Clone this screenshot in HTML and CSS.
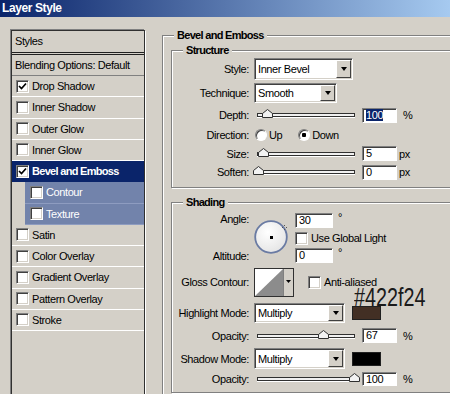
FILE: index.html
```html
<!DOCTYPE html>
<html lang="en">
<head>
    <meta charset="UTF-8">
    <meta name="viewport" content="width=device-width, initial-scale=1.0">
    <title>Layer Style</title>
    <link rel="stylesheet" href="styles.css">
</head>
<body>

    <div class="titlebar">Layer Style</div>

    <div class="dialog">
        <div class="styles-panel">
            <div class="panel-head">Styles</div>
            <div class="panel-blend">Blending Options: Default</div>
            <ul class="fx-list">
                <li class="fx"><span class="cb"><svg width="9" height="9" viewBox="0 0 9 9"><polyline points="1,4 3.5,6.5 8,1.5" fill="none" stroke="#000" stroke-width="1.7"/></svg></span>Drop Shadow</li>
                <li class="fx"><span class="cb"></span>Inner Shadow</li>
                <li class="fx"><span class="cb"></span>Outer Glow</li>
                <li class="fx"><span class="cb"></span>Inner Glow</li>
                <li class="fx active"><span class="cb"><svg width="9" height="9" viewBox="0 0 9 9"><polyline points="1,4 3.5,6.5 8,1.5" fill="none" stroke="#000" stroke-width="1.7"/></svg></span>Bevel and Emboss</li>
                <li class="fx sub"><span class="cb"></span>Contour</li>
                <li class="fx sub"><span class="cb"></span>Texture</li>
                <li class="fx"><span class="cb"></span>Satin</li>
                <li class="fx"><span class="cb"></span>Color Overlay</li>
                <li class="fx"><span class="cb"></span>Gradient Overlay</li>
                <li class="fx"><span class="cb"></span>Pattern Overlay</li>
                <li class="fx"><span class="cb"></span>Stroke</li>
            </ul>
        </div>

        <fieldset class="group outer">
            <legend>Bevel and Emboss</legend>

            <fieldset class="group inner">
                <legend>Structure</legend>

                <div class="row r-style">
                    <span class="lbl">Style:</span>
                    <div class="select w-style">Inner Bevel<span class="drop"><i class="arrow"></i></span></div>
                </div>
                <div class="row r-tech">
                    <span class="lbl">Technique:</span>
                    <div class="select w-tech">Smooth<span class="drop"><i class="arrow"></i></span></div>
                </div>
                <div class="row r-depth">
                    <span class="lbl">Depth:</span>
                    <div class="slider"><svg class="thumb" style="left: 9%" width="11" height="9" viewBox="0 0 11 9"><path d="M0.5 8.5V4.5L5.5 0.5L10.5 4.5V8.5Z" fill="#f2f2f2" stroke="#303030"/></svg></div>
                    <div class="field"><span class="sel">100</span></div>
                    <span class="unit">%</span>
                </div>
                <div class="row r-dir">
                    <span class="lbl">Direction:</span>
                    <span class="radio"></span><span class="radio-text">Up</span>
                    <span class="radio on"></span><span class="radio-text">Down</span>
                </div>
                <div class="row r-size">
                    <span class="lbl">Size:</span>
                    <div class="slider"><svg class="thumb" style="left: 5%" width="11" height="9" viewBox="0 0 11 9"><path d="M0.5 8.5V4.5L5.5 0.5L10.5 4.5V8.5Z" fill="#f2f2f2" stroke="#303030"/></svg></div>
                    <div class="field">5</div>
                    <span class="unit px">px</span>
                </div>
                <div class="row r-soften">
                    <span class="lbl">Soften:</span>
                    <div class="slider"><svg class="thumb" style="left: 0%" width="11" height="9" viewBox="0 0 11 9"><path d="M0.5 8.5V4.5L5.5 0.5L10.5 4.5V8.5Z" fill="#f2f2f2" stroke="#303030"/></svg></div>
                    <div class="field">0</div>
                    <span class="unit px">px</span>
                </div>
            </fieldset>

            <fieldset class="group inner shading">
                <legend>Shading</legend>

                <div class="angle">
                    <span class="lbl lbl-top">Angle:</span>
                    <svg class="dial" width="34" height="34" viewBox="0 0 34 34">
                        <defs>
                            <radialGradient id="dialFill" cx="0.4" cy="0.35" r="0.7">
                                <stop offset="0" stop-color="#ffffff"/>
                                <stop offset="1" stop-color="#e4e4e4"/>
                            </radialGradient>
                        </defs>
                        <circle cx="17" cy="17" r="15.8" fill="url(#dialFill)" stroke="#6a7ba3" stroke-width="1.8"/>
                        <rect x="16" y="16" width="3" height="3" fill="#000"/>
                        <g fill="#555">
                            <rect x="30" y="5" width="1" height="1"/>
                            <rect x="30" y="9" width="1" height="1"/>
                            <rect x="28" y="7" width="1" height="1"/>
                            <rect x="32" y="7" width="1" height="1"/>
                        </g>
                    </svg>
                    <div class="a-input"><div class="field w-angle">30</div><span class="deg">°</span></div>
                    <div class="a-check"><span class="cb"></span>Use Global Light</div>
                    <span class="lbl">Altitude:</span>
                    <div class="a-input"><div class="field w-angle">0</div><span class="deg">°</span></div>
                </div>

                <div class="row r-gloss">
                    <span class="lbl">Gloss Contour:</span>
                    <svg class="contour" width="40" height="29" viewBox="0 0 40 29">
                        <rect x="0.5" y="0.5" width="39" height="28" fill="#fff" stroke="#303030"/>
                        <polygon points="1,28 29,1 29,28" fill="#8c8c8c"/>
                        <rect x="29" y="1" width="10" height="27" fill="#d4d0c8"/>
                        <line x1="29.5" y1="1" x2="29.5" y2="28" stroke="#808080"/>
                        <polygon points="32,12 37,12 34.5,15" fill="#000"/>
                    </svg>
                    <span class="cb cb-anti"></span><span class="anti">Anti-aliased</span>
                    <span class="hex">#422f24</span>
                </div>
                <div class="row r-high">
                    <span class="lbl">Highlight Mode:</span>
                    <div class="select w-mode">Multiply<span class="drop"><i class="arrow"></i></span></div>
                    <span class="swatch highlight"></span>
                </div>
                <div class="row r-op1">
                    <span class="lbl">Opacity:</span>
                    <div class="slider"><svg class="thumb" style="left: 68%" width="11" height="9" viewBox="0 0 11 9"><path d="M0.5 8.5V4.5L5.5 0.5L10.5 4.5V8.5Z" fill="#f2f2f2" stroke="#303030"/></svg></div>
                    <div class="field">67</div>
                    <span class="unit">%</span>
                </div>
                <div class="row r-shadow">
                    <span class="lbl">Shadow Mode:</span>
                    <div class="select w-mode">Multiply<span class="drop"><i class="arrow"></i></span></div>
                    <span class="swatch shadow"></span>
                </div>
                <div class="row r-op2">
                    <span class="lbl">Opacity:</span>
                    <div class="slider"><svg class="thumb" style="left: 100%" width="11" height="9" viewBox="0 0 11 9"><path d="M0.5 8.5V4.5L5.5 0.5L10.5 4.5V8.5Z" fill="#f2f2f2" stroke="#303030"/></svg></div>
                    <div class="field">100</div>
                    <span class="unit">%</span>
                </div>
            </fieldset>
        </fieldset>
    </div>

</body>
</html>
```

FILE: styles.css
```css
body {
    margin: 0;
    width: 450px;
    height: 394px;
    overflow: hidden;
    background-color: #d4d0c8;
    color: #000;
    font-family: "Liberation Sans", Arial, sans-serif;
    font-size: 11px;
    letter-spacing: -0.4px;
}

.titlebar {
    height: 17px;
    line-height: 17px;
    padding-left: 2px;
    background: linear-gradient(to right, #0a246a, #a6caf0);
    color: white;
    font-size: 12px;
    font-weight: bold;
}

.dialog {
    display: flex;
    align-items: flex-start;
    height: 377px;
    overflow: hidden;
}

/* left list of effects */
.styles-panel {
    flex: none;
    width: 132px;
    height: 380px;
    margin: 13px 0 0 11px;
    border: 1px solid #303030;
    box-shadow: -1px -1px 0 #808080, 1px 1px 0 #fff;
}

.panel-head {
    height: 21px;
    line-height: 21px;
    padding-left: 3px;
    border-bottom: 3px double #202020;
}

.panel-blend {
    height: 20px;
    line-height: 20px;
    padding-left: 3px;
    border-bottom: 1px solid #808080;
}

.fx-list {
    list-style: none;
    margin: 0;
    padding: 0;
}

.fx {
    height: 20.25px;
    display: flex;
    align-items: center;
    padding-left: 4px;
    border-bottom: 1px solid #fff;
}

.fx.active {
    background-color: #0a246a;
    color: white;
    font-weight: bold;
    letter-spacing: -0.7px;
    border-bottom-color: #0a246a;
}

.fx.sub {
    margin-left: 13px;
    padding-left: 5px;
    background-color: #7283ab;
    color: white;
    border-bottom-color: #8e9cc0;
}

.cb {
    flex: none;
    box-sizing: border-box;
    width: 13px;
    height: 13px;
    margin-right: 3px;
    display: flex;
    align-items: center;
    justify-content: center;
    background-color: #fff;
    border: 1px solid;
    border-color: #808080 #fff #fff #808080;
    box-shadow: inset 1px 1px 0 #404040, inset -1px -1px 0 #d4d0c8;
}

/* fieldsets */
.group {
    margin: 0;
    padding: 0;
    border: 1px solid #808080;
    box-shadow: inset 1px 1px 0 #fff, 1px 1px 0 #fff;
}

.group legend {
    padding: 0 3px;
    line-height: 13px;
    font-weight: bold;
    letter-spacing: -0.7px;
    background-color: #d4d0c8;
}

.outer {
    flex: none;
    width: 320px;
    height: 400px;
    margin: 12px 0 0 17px;
    padding: 2px 0 0 8px;
}

.outer > legend {
    margin-left: 3px;
}

.inner {
    padding: 1px 0 7px 0;
}

.inner > legend {
    margin-left: 11px;
}

.shading {
    margin-top: 8px;
    padding: 4px 0 6px 0;
}

.row {
    display: flex;
    align-items: center;
}

.lbl {
    flex: none;
    width: 77px;
    margin-right: 5px;
    text-align: right;
}

.r-style { height: 22px; }
.r-tech { height: 20px; margin-top: 3px; }
.r-depth { height: 18px; margin-top: 3px; }
.r-dir { height: 16px; margin-top: 3px; }
.r-size { height: 15px; margin-top: 3px; }
.r-soften { height: 16px; margin-top: 3px; }
.r-gloss { height: 28px; margin-top: 5px; position: relative; }
.r-high { height: 20px; margin-top: 7px; }
.r-op1 { height: 15px; margin-top: 5px; }
.r-shadow { height: 21px; margin-top: 5px; }
.r-op2 { height: 14px; margin-top: 3px; }

/* dropdowns */
.select {
    box-sizing: border-box;
    height: 100%;
    display: flex;
    align-items: center;
    padding-left: 3px;
    background-color: #fff;
    border: 1px solid;
    border-color: #808080 #fff #fff #808080;
    box-shadow: inset 1px 1px 0 #404040, inset -1px -1px 0 #d4d0c8;
}

.w-style { width: 99px; }
.w-tech { width: 83px; }
.w-mode { width: 91px; }

.drop {
    box-sizing: border-box;
    align-self: stretch;
    width: 15px;
    margin: 1px 1px 1px auto;
    display: flex;
    align-items: center;
    justify-content: center;
    background-color: #d4d0c8;
    border: 1px solid;
    border-color: #fff #404040 #404040 #fff;
}

.arrow {
    width: 0;
    height: 0;
    border-left: 3.5px solid transparent;
    border-right: 3.5px solid transparent;
    border-top: 4px solid #000;
}

/* sliders and text fields */
.slider {
    position: relative;
    width: 96px;
    height: 2px;
    margin: 0 7px 0 3px;
    background-color: #f0f0f0;
    border: 1px solid #303030;
    box-shadow: 0 1px 0 #fff;
}

.thumb {
    position: absolute;
    top: -5px;
    margin-left: -5px;
}

.field {
    box-sizing: border-box;
    width: 35px;
    height: 15px;
    line-height: 13px;
    padding-left: 3px;
    background-color: #fff;
    border: 1px solid;
    border-color: #808080 #fff #fff #808080;
    box-shadow: inset 1px 1px 0 #404040;
}

.r-op2 .field {
    height: 14px;
    line-height: 12px;
}

.sel {
    background-color: #0a246a;
    color: white;
}

.unit {
    margin-left: 6px;
}

.unit.px {
    margin-left: 2px;
}

/* radios */
.radio {
    flex: none;
    box-sizing: border-box;
    width: 12px;
    height: 12px;
    margin-left: 1px;
    border-radius: 50%;
    background-color: #fff;
    border: 1px solid;
    border-color: #808080 #fff #fff #808080;
    box-shadow: inset 1px 1px 0 #404040;
}

.radio.on {
    margin-left: 16px;
    background: radial-gradient(circle, #000 2px, #fff 2.5px);
}

.radio-text {
    margin-left: 2px;
}

/* angle block */
.angle {
    display: grid;
    grid-template-columns: 77px 39px auto;
    grid-template-rows: 15px 12px 15px;
    row-gap: 4px;
}

.angle .lbl {
    align-self: center;
}

.angle .lbl-top {
    align-self: start;
}

.dial {
    grid-column: 2;
    grid-row: 1 / 4;
    margin: 7px 0 0 5px;
}

.a-input,
.a-check {
    grid-column: 3;
    display: flex;
    align-items: center;
    margin-left: 7px;
}

.w-angle {
    width: 38px;
}

.deg {
    align-self: flex-start;
    margin-left: 5px;
    line-height: 9px;
}

.contour {
    flex: none;
}

.cb-anti {
    margin-left: 14px;
}

.anti {
    line-height: 11px;
}

.hex {
    position: absolute;
    left: 182px;
    top: 20px;
    font-size: 25px;
    line-height: 18px;
    letter-spacing: 0;
    color: #1a1a1a;
    transform: scaleX(0.79);
    transform-origin: left top;
}

.swatch {
    flex: none;
    box-sizing: border-box;
    width: 29px;
    height: 14px;
    margin-left: 7px;
    border: 1px solid #202020;
}

.swatch.highlight {
    background-color: #422f24;
}

.swatch.shadow {
    background-color: #000;
}
```
